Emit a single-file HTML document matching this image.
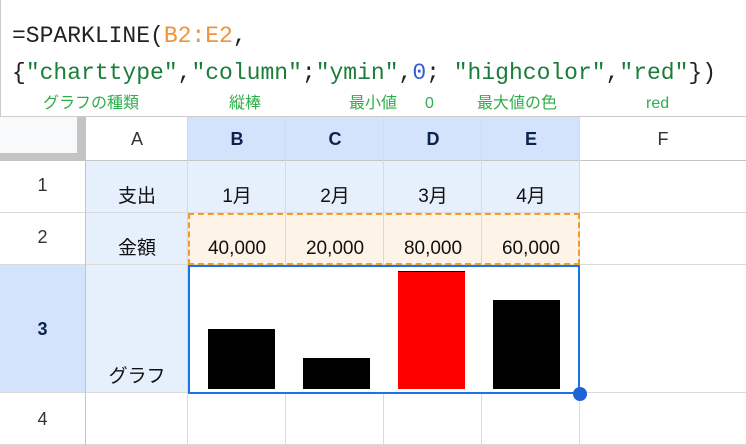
<!DOCTYPE html><html><head><meta charset="utf-8"><style>
body{margin:0;width:746px;height:445px;overflow:hidden;background:#fff;position:relative;font-family:"Liberation Sans","Noto Sans CJK JP",sans-serif}
.a{position:absolute}
.f{position:absolute;left:12px;font-family:"Liberation Mono","Noto Sans CJK JP",monospace;font-size:23px;line-height:28px;color:#222;white-space:pre}
.g{color:#1b7d3a}
.n{position:absolute;top:94px;font-size:16px;line-height:20px;color:#2fae4b;white-space:nowrap}
.c{position:absolute;display:flex;align-items:flex-end;justify-content:center;font-size:19px;color:#111;box-sizing:border-box;padding-bottom:5px}
.h{position:absolute;display:flex;align-items:center;justify-content:center;font-size:18px;color:#333}
.vl{position:absolute;width:1px;background:#dadada}
.hl{position:absolute;height:1px;background:#dadada;left:0;width:746px}
</style></head><body>
<div class="a" style="left:0;top:0;width:1px;height:117px;background:#ccc"></div>
<div class="f" style="top:22px">=SPARKLINE(<span style="color:#f0923b">B2:E2</span>,</div>
<div class="f" style="top:59px">{<span class="g">"charttype"</span>,<span class="g">"column"</span>;<span class="g">"ymin"</span>,<span style="color:#2f5fd0">0</span>; <span class="g">"highcolor"</span>,<span class="g">"red"</span>})</div>
<div class="n" style="left:43px">グラフの種類</div>
<div class="n" style="left:229px">縦棒</div>
<div class="n" style="left:349px">最小値</div>
<div class="n" style="left:425px">0</div>
<div class="n" style="left:477px">最大値の色</div>
<div class="n" style="left:646px">red</div>
<div class="hl" style="top:116px;background:#ccc"></div>
<div class="a" style="left:0;top:117px;width:86px;height:44px;background:#c4c4c4"></div>
<div class="a" style="left:0;top:117px;width:77px;height:36px;background:#f8f9fa"></div>
<div class="a" style="left:188px;top:117px;width:392px;height:44px;background:#d3e3fb"></div>
<div class="h" style="left:86px;top:117px;width:102px;height:44px">A</div>
<div class="h" style="left:188px;top:117px;width:98px;height:44px;font-weight:bold;color:#0b2250">B</div>
<div class="h" style="left:286px;top:117px;width:98px;height:44px;font-weight:bold;color:#0b2250">C</div>
<div class="h" style="left:384px;top:117px;width:98px;height:44px;font-weight:bold;color:#0b2250">D</div>
<div class="h" style="left:482px;top:117px;width:98px;height:44px;font-weight:bold;color:#0b2250">E</div>
<div class="h" style="left:580px;top:117px;width:166px;height:44px">F</div>
<div class="a" style="left:86px;top:161px;width:494px;height:104px;background:#e6f0fc"></div>
<div class="a" style="left:86px;top:265px;width:102px;height:128px;background:#e6f0fc"></div>
<div class="a" style="left:188px;top:213px;width:392px;height:52px;background:#fdf3e7"></div>
<div class="a" style="left:0;top:265px;width:85px;height:128px;background:#d3e3fb"></div>
<div class="hl" style="top:160px;background:#c4c4c4"></div>
<div class="hl" style="top:212px"></div>
<div class="hl" style="top:264px"></div>
<div class="hl" style="top:392px"></div>
<div class="hl" style="top:444px"></div>
<div class="vl" style="left:85px;top:117px;height:328px;background:#c4c4c4"></div>
<div class="vl" style="left:187px;top:117px;height:328px"></div>
<div class="vl" style="left:285px;top:117px;height:328px"></div>
<div class="vl" style="left:383px;top:117px;height:328px"></div>
<div class="vl" style="left:481px;top:117px;height:328px"></div>
<div class="vl" style="left:579px;top:117px;height:328px"></div>
<div class="h" style="left:0;top:161px;width:85px;height:48px">1</div>
<div class="h" style="left:0;top:213px;width:85px;height:48px">2</div>
<div class="h" style="left:0;top:265px;width:85px;height:128px;font-weight:bold;color:#0b2250">3</div>
<div class="h" style="left:0;top:393px;width:85px;height:52px">4</div>
<div class="c" style="left:86px;top:161px;width:102px;height:52px">支出</div>
<div class="c" style="left:188px;top:161px;width:98px;height:52px">1月</div>
<div class="c" style="left:286px;top:161px;width:98px;height:52px">2月</div>
<div class="c" style="left:384px;top:161px;width:98px;height:52px">3月</div>
<div class="c" style="left:482px;top:161px;width:98px;height:52px">4月</div>
<div class="c" style="left:86px;top:213px;width:102px;height:52px">金額</div>
<div class="c" style="left:188px;top:213px;width:98px;height:52px">40,000</div>
<div class="c" style="left:286px;top:213px;width:98px;height:52px">20,000</div>
<div class="c" style="left:384px;top:213px;width:98px;height:52px">80,000</div>
<div class="c" style="left:482px;top:213px;width:98px;height:52px">60,000</div>
<div class="c" style="left:86px;top:265px;width:102px;height:128px">グラフ</div>
<div class="a" style="left:188px;top:213px;width:392px;height:52px;border:2px dashed #f39a2b;box-sizing:border-box"></div>
<div class="a" style="left:188px;top:265px;width:392px;height:129px;background:#fff;border:2px solid #1a73e8;box-sizing:border-box"></div>
<div class="a" style="left:208px;top:329px;width:67px;height:60px;background:#000"></div>
<div class="a" style="left:303px;top:358px;width:67px;height:31px;background:#000"></div>
<div class="a" style="left:398px;top:271px;width:67px;height:118px;background:#f00;border-top:1px solid #000;box-sizing:border-box"></div>
<div class="a" style="left:493px;top:300px;width:67px;height:89px;background:#000"></div>
<div class="a" style="left:573px;top:387px;width:14px;height:14px;border-radius:50%;background:#1a63d8"></div>
</body></html>
